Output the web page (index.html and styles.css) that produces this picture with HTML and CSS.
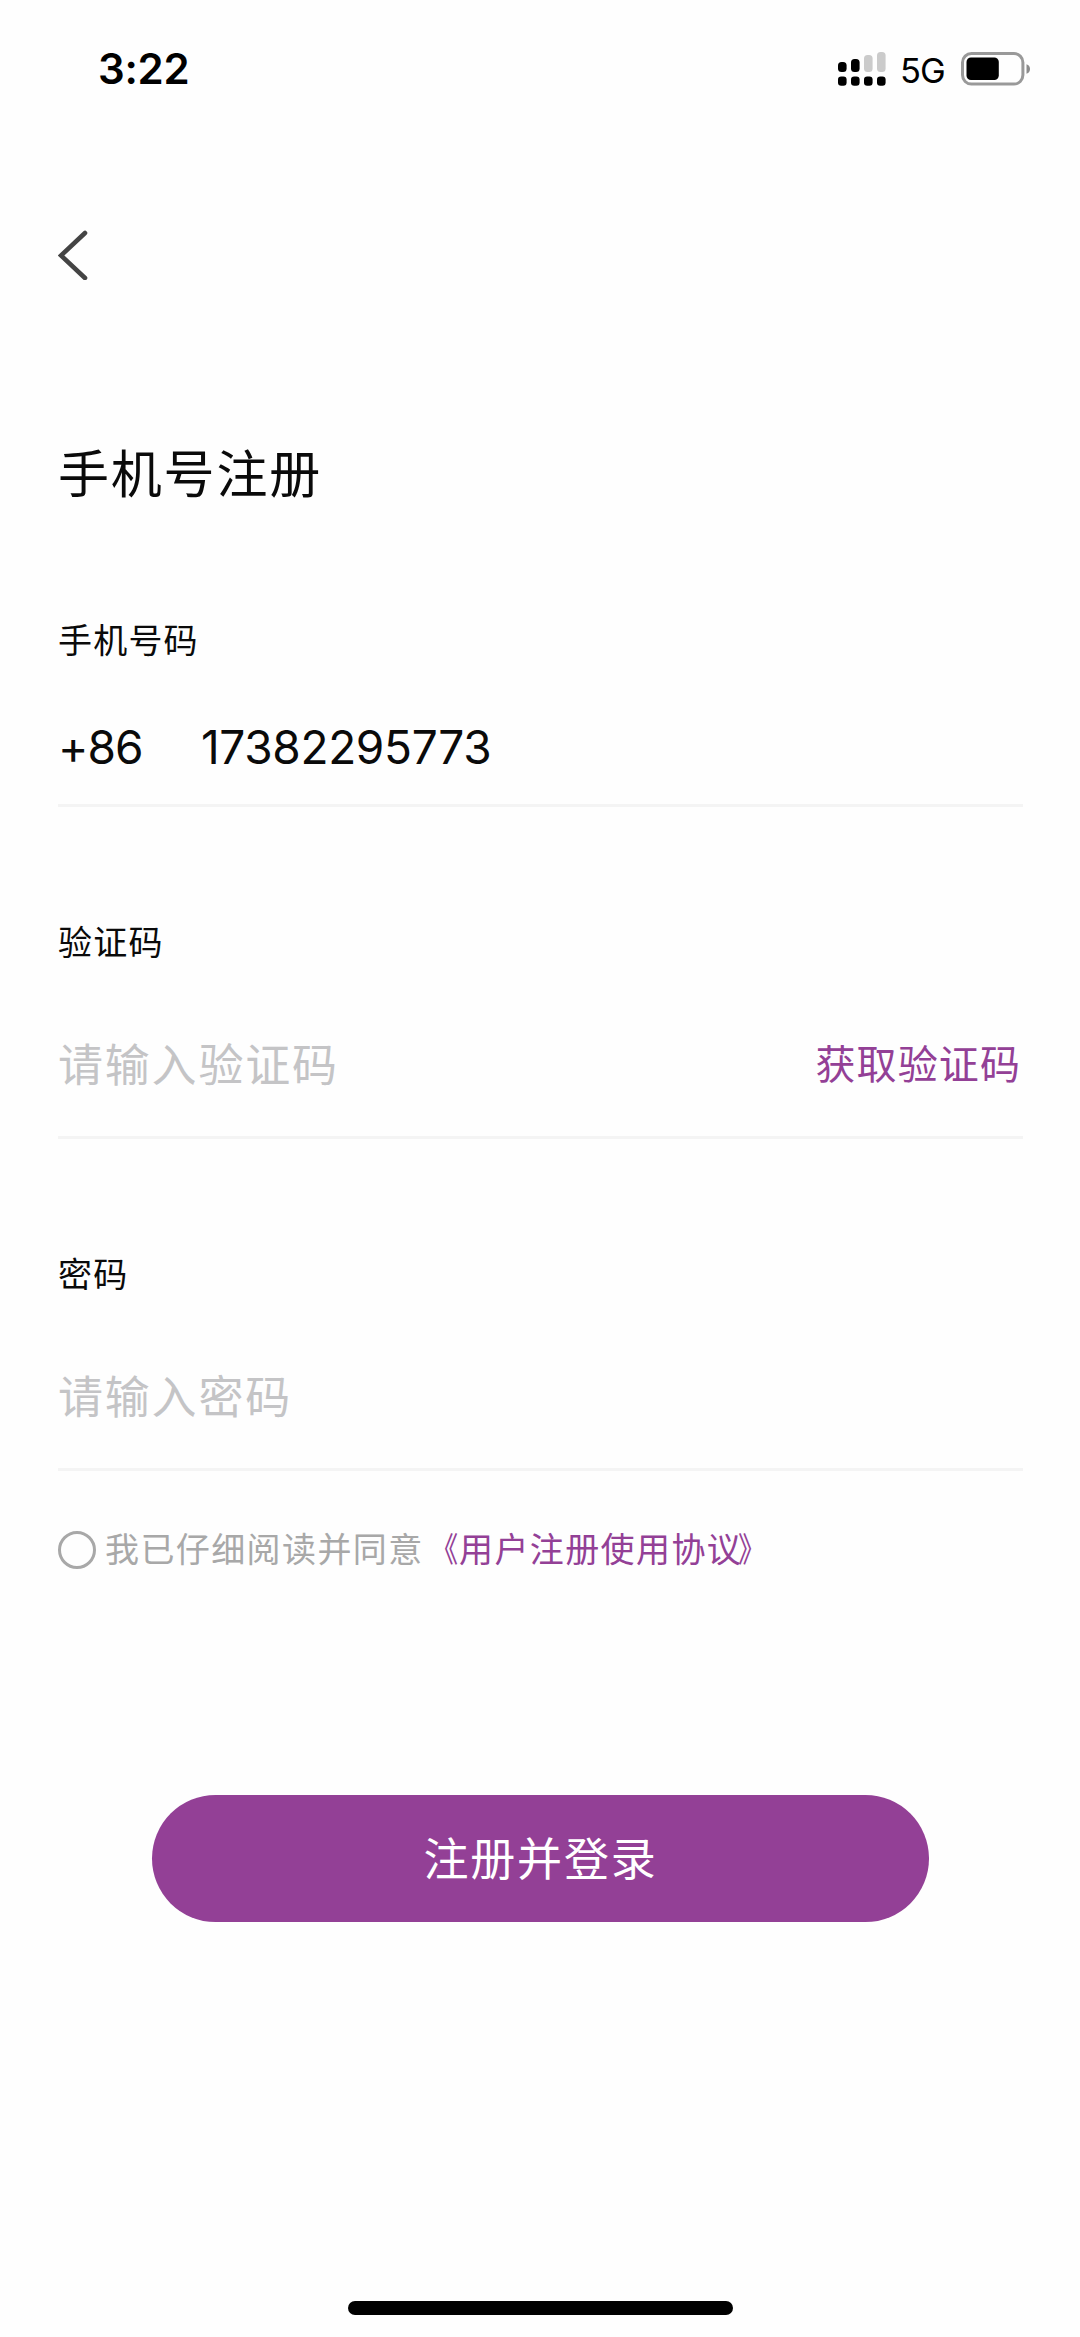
FILE: index.html
```html
<!DOCTYPE html>
<html lang="zh-CN">
<head>
<meta charset="utf-8">
<title>手机号注册</title>
<link rel="stylesheet" href="styles.css">
</head>
<body>
<div class="screen">
  <header class="status">
    <span class="time">3:22</span>
    <div class="indicators">
      <svg class="signal" width="50" height="36" viewBox="0 0 50 36">
        <g fill="#000">
          <rect x="1" y="12" width="8.6" height="10" rx="3.5"/>
          <rect x="14" y="9" width="8.6" height="13" rx="3.5"/>
          <rect x="1" y="26.4" width="8.6" height="9.4" rx="3.2"/>
          <rect x="14" y="26.4" width="8.6" height="9.4" rx="3.2"/>
          <rect x="27" y="26.4" width="8.6" height="9.4" rx="3.2"/>
          <rect x="40" y="26.4" width="8.6" height="9.4" rx="3.2"/>
        </g>
        <g fill="#cbcbcb">
          <rect x="27" y="5" width="8.6" height="17" rx="3.5"/>
          <rect x="40" y="2" width="8.6" height="20" rx="3.5"/>
        </g>
      </svg>
      <span class="network">5G</span>
      <svg class="battery" width="70" height="34" viewBox="0 0 70 34">
        <rect x="1.500" y="1.500" width="60.4" height="30.6" rx="9" fill="none" stroke="#999" stroke-width="3"/>
        <rect x="5.5" y="5.5" width="32.3" height="22.5" rx="4.5" fill="#000"/>
        <path d="M65.5 12.2Q69 13.500 69 17T65.500 21.800Z" fill="#8c8c8c"/>
      </svg>
    </div>
  </header>

  <nav class="nav">
    <svg width="30" height="50" viewBox="0 0 30 50">
      <path d="M27 3L3 25.500L27 48" fill="none" stroke="#444" stroke-width="4.600" stroke-linecap="round" stroke-linejoin="miter"/>
    </svg>
  </nav>

  <main class="form">
    <h1 class="title">手机号注册</h1>

    <section class="field field-phone">
      <div class="label">手机号码</div>
      <div class="entry phone">
        <span class="prefix">+86</span>
        <span class="number">17382295773</span>
      </div>
    </section>

    <section class="field">
      <div class="label">验证码</div>
      <div class="entry">
        <span class="placeholder">请输入验证码</span>
        <span class="get-code">获取验证码</span>
      </div>
    </section>

    <section class="field">
      <div class="label">密码</div>
      <div class="entry">
        <span class="placeholder">请输入密码</span>
      </div>
    </section>

    <div class="agreement">
      <span class="radio"></span>
      <span class="consent">我已仔细阅读并同意</span>
      <span class="terms"><span class="mark open">《</span>用户注册使用协议<span class="mark close">》</span></span>
    </div>

    <button class="submit" type="button">注册并登录</button>
  </main>

  <footer class="home"><div class="home-bar"></div></footer>
</div>
</body>
</html>
```
FILE: styles.css
```css
* { box-sizing: border-box; }

body {
  margin: 0;
  background: #fefefe;
  color: #0a0a0a;
  font-family: Inter, "Noto Sans CJK SC", sans-serif;
}

.screen {
  display: flex;
  flex-direction: column;
  width: 1080px;
  height: 2337px;
  overflow: hidden;
}

.status {
  display: flex;
  justify-content: space-between;
  align-items: flex-start;
  height: 136px;
  padding: 50px 49px 0 98px;
}

.time {
  font-size: 42px;
  font-weight: 600;
  line-height: 38px;
  letter-spacing: -0.3px;
  color: #000;
}

.indicators { display: flex; }

.network {
  width: 44px;
  margin: 0 17px 0 13px;
  font-size: 34.5px;
  line-height: 41px;
  letter-spacing: -1px;
  color: #000;
}

.battery { margin-top: 2px; }

.nav {
  height: 274px;
  padding: 94px 58px 0;
}

.nav svg { display: block; }

.form {
  display: flex;
  flex-direction: column;
  padding: 0 57px 0 58px;
}

.title {
  margin: 35px 0 0;
  font-size: 51px;
  font-weight: 400;
  line-height: 60px;
  letter-spacing: 1.8px;
}

.field {
  display: flex;
  flex-direction: column;
  height: 332px;
  border-bottom: 3px solid #f4f4f4;
}

.field-phone { height: 302px; }

.label {
  margin-top: 113px;
  font-size: 34px;
  line-height: 46px;
  letter-spacing: 1.2px;
}

.entry {
  display: flex;
  justify-content: space-between;
  align-items: center;
  height: 60px;
  margin-top: 66px;
}

.phone {
  justify-content: flex-start;
  margin-top: 53px;
  font-size: 46px;
}

.prefix {
  width: 143px;
  letter-spacing: -0.9px;
}

.number { letter-spacing: -0.35px; }

.placeholder {
  font-size: 45px;
  letter-spacing: 1.8px;
  color: #c4c4c6;
}

.get-code {
  margin-right: 2px;
  font-size: 40px;
  letter-spacing: 1.1px;
  color: #934096;
}

.agreement {
  display: flex;
  align-items: center;
  height: 46px;
  margin-top: 56px;
  font-size: 34px;
  letter-spacing: 1.4px;
}

.radio {
  width: 38px;
  height: 38px;
  margin-right: 9px;
  border: 3px solid #a8a8a8;
  border-radius: 50%;
}

.consent,
.terms {
  height: 46px;
  line-height: 46px;
}

.consent { color: #a8a8a8; }

.terms { color: #934096; }

.mark { display: inline-block; }

.open {
  transform: scaleX(0.82);
  transform-origin: right;
}

.close {
  transform: translateX(-4px) scaleX(0.82);
  transform-origin: left;
}

.submit {
  align-self: center;
  width: 777px;
  height: 127px;
  margin-top: 222px;
  padding: 0 0 4px;
  border: 0;
  border-radius: 64px;
  background: #934096;
  color: #fff;
  font-family: inherit;
  font-size: 45px;
  letter-spacing: 1.8px;
}

.home {
  display: flex;
  justify-content: center;
  margin-top: auto;
  padding-bottom: 22px;
}

.home-bar {
  width: 385px;
  height: 14px;
  border-radius: 7px;
  background: #000;
}
```
